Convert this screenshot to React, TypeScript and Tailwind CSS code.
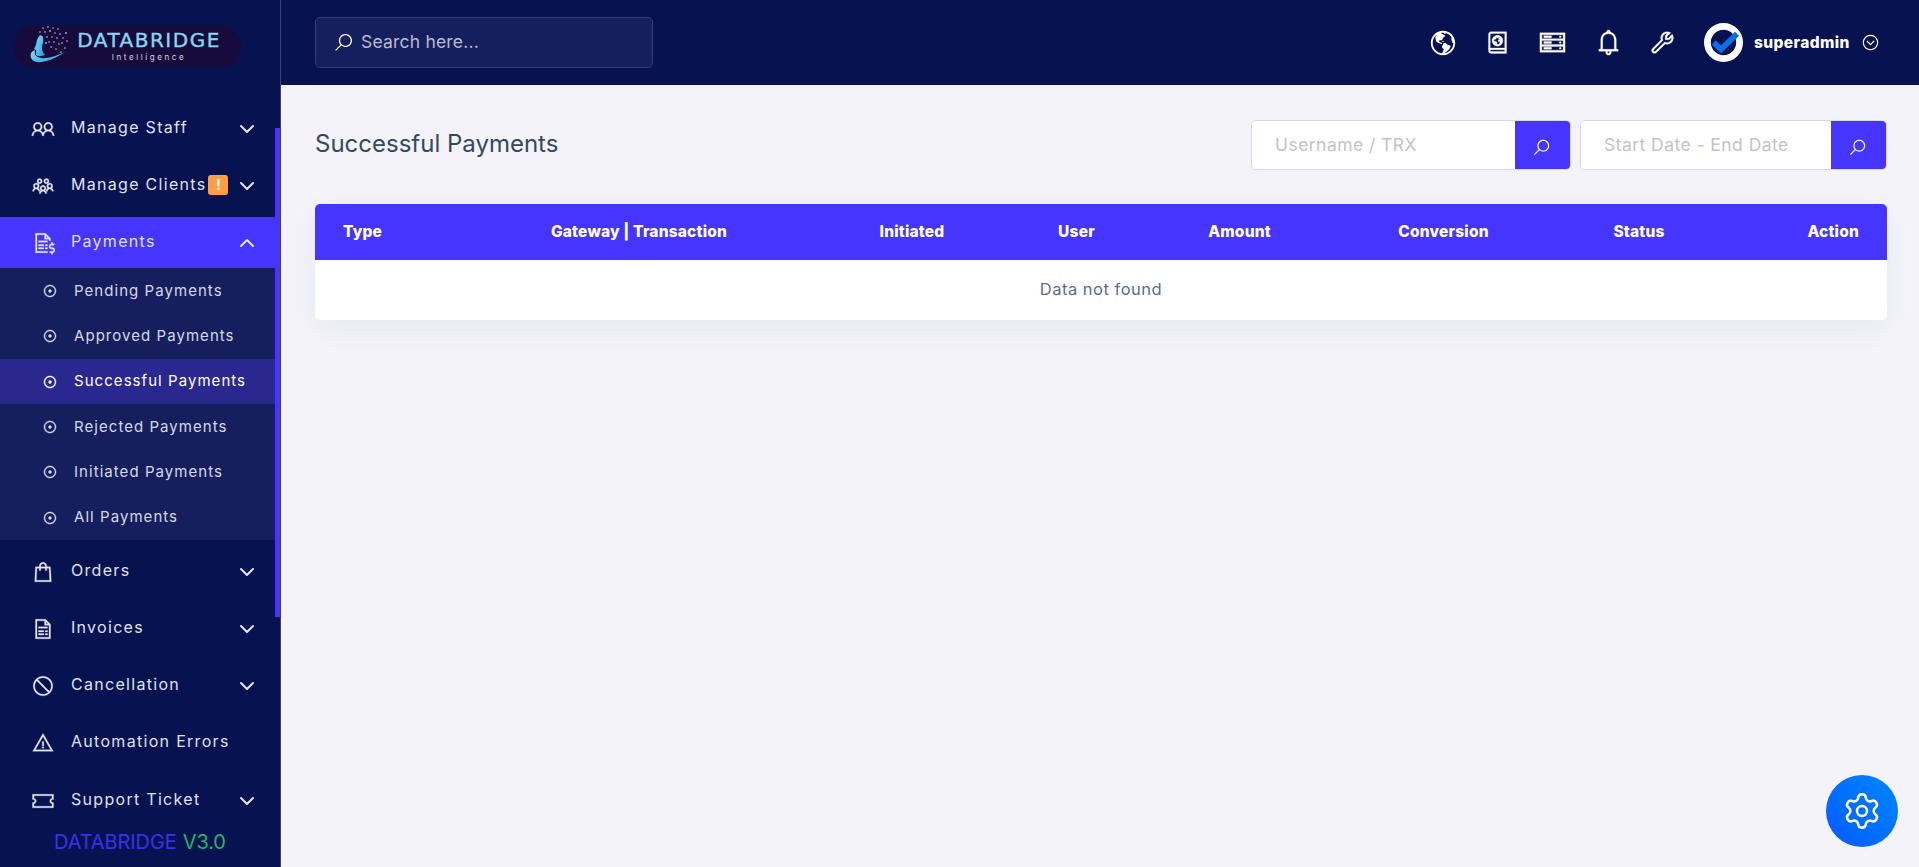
import React from "react";
import { ChevronDown, ChevronUp, Settings } from "lucide-react";
import {
  LiaUserFriendsSolid,
  LiaUsersSolid,
  LiaFileInvoiceDollarSolid,
  LiaShoppingBagSolid,
  LiaFileInvoiceSolid,
  LiaBanSolid,
  LiaExclamationTriangleSolid,
  LiaTicketAltSolid,
  LiaDotCircle,
  LiaSearchSolid,
  LiaGlobeAmericasSolid,
  LiaAtlasSolid,
  LiaServerSolid,
  LiaBell,
  LiaWrenchSolid,
  LiaChevronCircleDownSolid,
} from "react-icons/lia";

const dots: [number, number, string][] = [
  [30, 5, "#c2547f"], [35, 4, "#4f8fd0"], [40, 5, "#c2547f"], [45, 6, "#4f8fd0"], [27, 9, "#4f8fd0"],
  [32, 9, "#c2547f"], [37, 8, "#7fb0e0"], [42, 10, "#c2547f"], [47, 11, "#4f8fd0"], [50, 15, "#c2547f"],
  [34, 14, "#4f8fd0"], [39, 14, "#c2547f"], [44, 15, "#4f8fd0"], [49, 20, "#4f8fd0"], [36, 19, "#c2547f"],
  [41, 19, "#4f8fd0"], [46, 21, "#c2547f"], [38, 24, "#4f8fd0"], [43, 26, "#c2547f"], [52, 25, "#4f8fd0"],
  [48, 29, "#4f8fd0"], [53, 10, "#7fb0e0"], [29, 14, "#7fb0e0"], [33, 20, "#7fb0e0"], [54, 18, "#c2547f"],
];

function Logo() {
  return (
    <div className="relative ml-[13px] flex h-[43px] w-[228px] items-center rounded-full bg-[#170b3b]">
      <svg viewBox="0 0 78 48" className="absolute left-0 top-[-2px] h-[48px] w-[78px]">
        <defs>
          <linearGradient id="lg" x1="0" y1="0" x2="1" y2="1">
            <stop offset="0" stopColor="#8fdcf5" />
            <stop offset="1" stopColor="#1b9fe0" />
          </linearGradient>
        </defs>
        {dots.map(([x, y, c], i) => (
          <circle key={i} cx={x} cy={y} r="1" fill={c} />
        ))}
        <path d="M28 12 C24 14 24 18 23 22 L21 26 L23 27 L23 32 C26 34 29 33 32 32 C29 29 28 24 30 20 C31 17 30 14 28 12 Z" fill="url(#lg)" />
        <path d="M18 30 C16 37 22 40 28 39 C36 38 45 34 52 29 C43 33 34 36 28 35 C23 34 21 32 22 27 C20 28 18.500 29 18 30 Z" fill="url(#lg)" />
      </svg>
      <div className="ml-[65px] flex w-[142px] flex-col items-center">
        <span className="font-['DejaVu_Sans',sans-serif] text-[20px] leading-[18px] tracking-[1.500px] text-[#84d8f3] [-webkit-text-stroke:0.4px_#84d8f3]">DATABRIDGE</span>
        <span className="mt-[3px] text-[8px] leading-[10px] tracking-[2.600px] text-[#d8d4e6]">Intelligence</span>
      </div>
    </div>
  );
}

type Item = { label: string; Icon: React.ComponentType<any>; open?: boolean; active?: boolean; chevron?: boolean; badge?: boolean };

function MenuRow({ label, Icon, active, open, chevron = true, badge }: Item) {
  return (
    <a className={`flex h-[51px] items-center pl-[31px] ${active ? "bg-[#4634ff]" : ""}`}>
      <Icon className="h-[24px] w-[24px] shrink-0 text-[#e4e6f1]" stroke="currentColor" strokeWidth={0.4} />
      <span className="ml-[16px] -translate-y-[2px] text-[16px] tracking-[1.300px] text-[#dfe2f0]">{label}</span>
      {badge && (
        <span className="ml-[2px] flex h-[20px] w-[20px] -translate-y-[1px] items-center justify-center rounded-[3px] bg-[#ff9f43] text-[14px] font-semibold text-white">!</span>
      )}
      <span className="ml-auto mr-[16px] flex">
        {chevron && (open ? <ChevronUp size={24} strokeWidth={2} className="text-[#e4e6f1]" /> : <ChevronDown size={24} strokeWidth={2} className="text-[#e4e6f1]" />)}
      </span>
    </a>
  );
}

function SubRow({ label, active }: { label: string; active?: boolean }) {
  return (
    <a className={`flex h-[45.300px] items-center pl-[42px] ${active ? "bg-[#2a278f]" : ""}`}>
      <LiaDotCircle className={`h-[16px] w-[16px] shrink-0 ${active ? "text-white" : "text-[#d9dbe8]"}`} stroke="currentColor" strokeWidth={0.8} />
      <span className={`ml-[16px] text-[15px] tracking-[1.050px] ${active ? "text-white" : "text-[#d5d8e6]"}`}>{label}</span>
    </a>
  );
}

function Sidebar() {
  return (
    <aside className="relative flex h-[867px] w-[281px] shrink-0 flex-col border-r border-r-[#3a4272] bg-[#071251]">
      <div className="flex h-[103px] shrink-0 pt-[25px]">
        <Logo />
      </div>
      <nav className="w-[275px] flex-1 overflow-hidden">
        <div className="flex flex-col gap-[6.200px]">
          <MenuRow label="Manage Staff" Icon={LiaUserFriendsSolid} />
          <MenuRow label="Manage Clients" Icon={LiaUsersSolid} badge />
          <div>
            <MenuRow label="Payments" Icon={LiaFileInvoiceDollarSolid} active open />
            <div className="bg-[#151f5e]">
              <SubRow label="Pending Payments" />
              <SubRow label="Approved Payments" />
              <SubRow label="Successful Payments" active />
              <SubRow label="Rejected Payments" />
              <SubRow label="Initiated Payments" />
              <SubRow label="All Payments" />
            </div>
          </div>
          <MenuRow label="Orders" Icon={LiaShoppingBagSolid} />
          <MenuRow label="Invoices" Icon={LiaFileInvoiceSolid} />
          <MenuRow label="Cancellation" Icon={LiaBanSolid} />
          <MenuRow label="Automation Errors" Icon={LiaExclamationTriangleSolid} chevron={false} />
          <MenuRow label="Support Ticket" Icon={LiaTicketAltSolid} />
        </div>
      </nav>
      <div className="flex h-[40px] shrink-0 items-start justify-center text-[20px] leading-[30px] tracking-[-0.100px]">
        <span className="text-[#3a31e6]">DATABRIDGE</span>
        <span className="ml-[6px] text-[#1fb763]">V3.0</span>
      </div>
      <div className="absolute left-[275px] top-[128px] h-[489px] w-[5px] bg-[#4634ff]" />
    </aside>
  );
}

function Avatar() {
  return (
    <svg viewBox="0 0 40 40" className="h-[39px] w-[39px]">
      <circle cx="20" cy="20" r="16.500" fill="none" stroke="#fff" strokeWidth="7" />
      <path d="M10 20 L17.500 27 L34 11" fill="none" stroke="#0a6fe8" strokeWidth="6" />
    </svg>
  );
}

function Header() {
  return (
    <header className="flex h-[85px] items-center bg-[#071251] pl-[34px]">
      <div className="flex h-[51px] w-[338px] items-center rounded-[5px] border border-[#333c74] bg-[#151f5e] pl-[17px]">
        <LiaSearchSolid className="h-[21px] w-[21px] text-white" />
        <input
          placeholder="Search here..."
          className="ml-[7px] w-[260px] bg-transparent text-[17.500px] tracking-[0.200px] text-white outline-none placeholder:text-[#b9bccc]"
        />
      </div>
      <div className="ml-auto flex items-center">
        <LiaGlobeAmericasSolid className="h-[30px] w-[30px] text-white" />
        <LiaAtlasSolid className="ml-[25px] h-[29px] w-[29px] text-white" stroke="currentColor" strokeWidth={0.3} />
        <LiaServerSolid className="ml-[25px] h-[31px] w-[31px] text-white" stroke="currentColor" strokeWidth={0.3} />
        <LiaBell className="ml-[25px] h-[31px] w-[31px] text-white" stroke="currentColor" strokeWidth={0.3} />
        <LiaWrenchSolid className="ml-[24px] h-[29px] w-[29px] text-white" stroke="currentColor" strokeWidth={0.3} />
        <div className="ml-[27px] flex items-center">
          <Avatar />
          <span className="ml-[11px] w-[96px] text-[15.500px] font-extrabold tracking-[0.400px] text-white">superadmin</span>
          <LiaChevronCircleDownSolid className="ml-[11px] mr-[39px] h-[19px] w-[19px] text-white" />
        </div>
      </div>
    </header>
  );
}

function Filter({ placeholder, width }: { placeholder: string; width: string }) {
  return (
    <div className={`flex h-[50px] overflow-hidden rounded-[5px] border border-[#d7d9e2] bg-white ${width}`}>
      <input
        placeholder={placeholder}
        className="min-w-0 flex-1 bg-white pl-[23px] pt-[1px] text-[17.500px] tracking-[0.450px] text-[#34495e] outline-none placeholder:text-[#c5c3c3]"
      />
      <button className="-my-px -mr-px flex w-[56px] items-center justify-center bg-[#4634ff]">
        <LiaSearchSolid className="mr-[3px] mt-[6px] h-[19px] w-[19px] text-white" />
      </button>
    </div>
  );
}

const heads: [string, string][] = [
  ["Type", "w-[185px] pl-[28px] text-left"],
  ["Gateway | Transaction", "w-[278px] text-center"],
  ["Initiated", "w-[268px] text-center"],
  ["User", "w-[61px] text-center"],
  ["Amount", "w-[265px] text-center"],
  ["Conversion", "w-[143px] text-center"],
  ["Status", "w-[248px] text-center"],
  ["Action", "w-[124px] pr-[28px] text-right"],
];

function Main() {
  return (
    <main className="flex-1 pl-[34px] pr-[32px]">
      <div className="flex h-[119px] items-center justify-between">
        <h1 className="-translate-y-[1px] text-[24px] font-normal text-[#34495e]">Successful Payments</h1>
        <div className="flex gap-[9px]">
          <Filter placeholder="Username / TRX" width="w-[320px]" />
          <Filter placeholder="Start Date - End Date" width="w-[307px]" />
        </div>
      </div>
      <div className="overflow-hidden rounded-[5px] bg-white shadow-[0_8px_30px_rgba(40,40,90,0.05)]">
        <table className="w-full table-fixed border-collapse">
          <thead>
            <tr className="h-[56px] bg-[#4634ff]">
              {heads.map(([h, c]) => (
                <th key={h} className={`${c} text-[15.500px] font-extrabold tracking-[0.200px] text-white`}>{h}</th>
              ))}
            </tr>
          </thead>
          <tbody>
            <tr className="h-[60px]">
              <td colSpan={8} className="pb-[2px] text-center text-[16.500px] tracking-[0.500px] text-[#5b6e88]">Data not found</td>
            </tr>
          </tbody>
        </table>
      </div>
    </main>
  );
}

export default function App() {
  return (
    <div className="relative flex h-[867px] w-full overflow-hidden bg-[#f3f3f9] font-['Inter',sans-serif]">
      <Sidebar />
      <div className="flex min-w-0 flex-1 flex-col">
        <Header />
        <Main />
      </div>
      <button className="absolute left-[1826px] top-[775px] flex h-[72px] w-[72px] items-center justify-center rounded-full bg-gradient-to-tr from-[#0a58ff] to-[#0586ff]">
        <Settings size={40} strokeWidth={1.5} className="text-white" />
      </button>
    </div>
  );
}
